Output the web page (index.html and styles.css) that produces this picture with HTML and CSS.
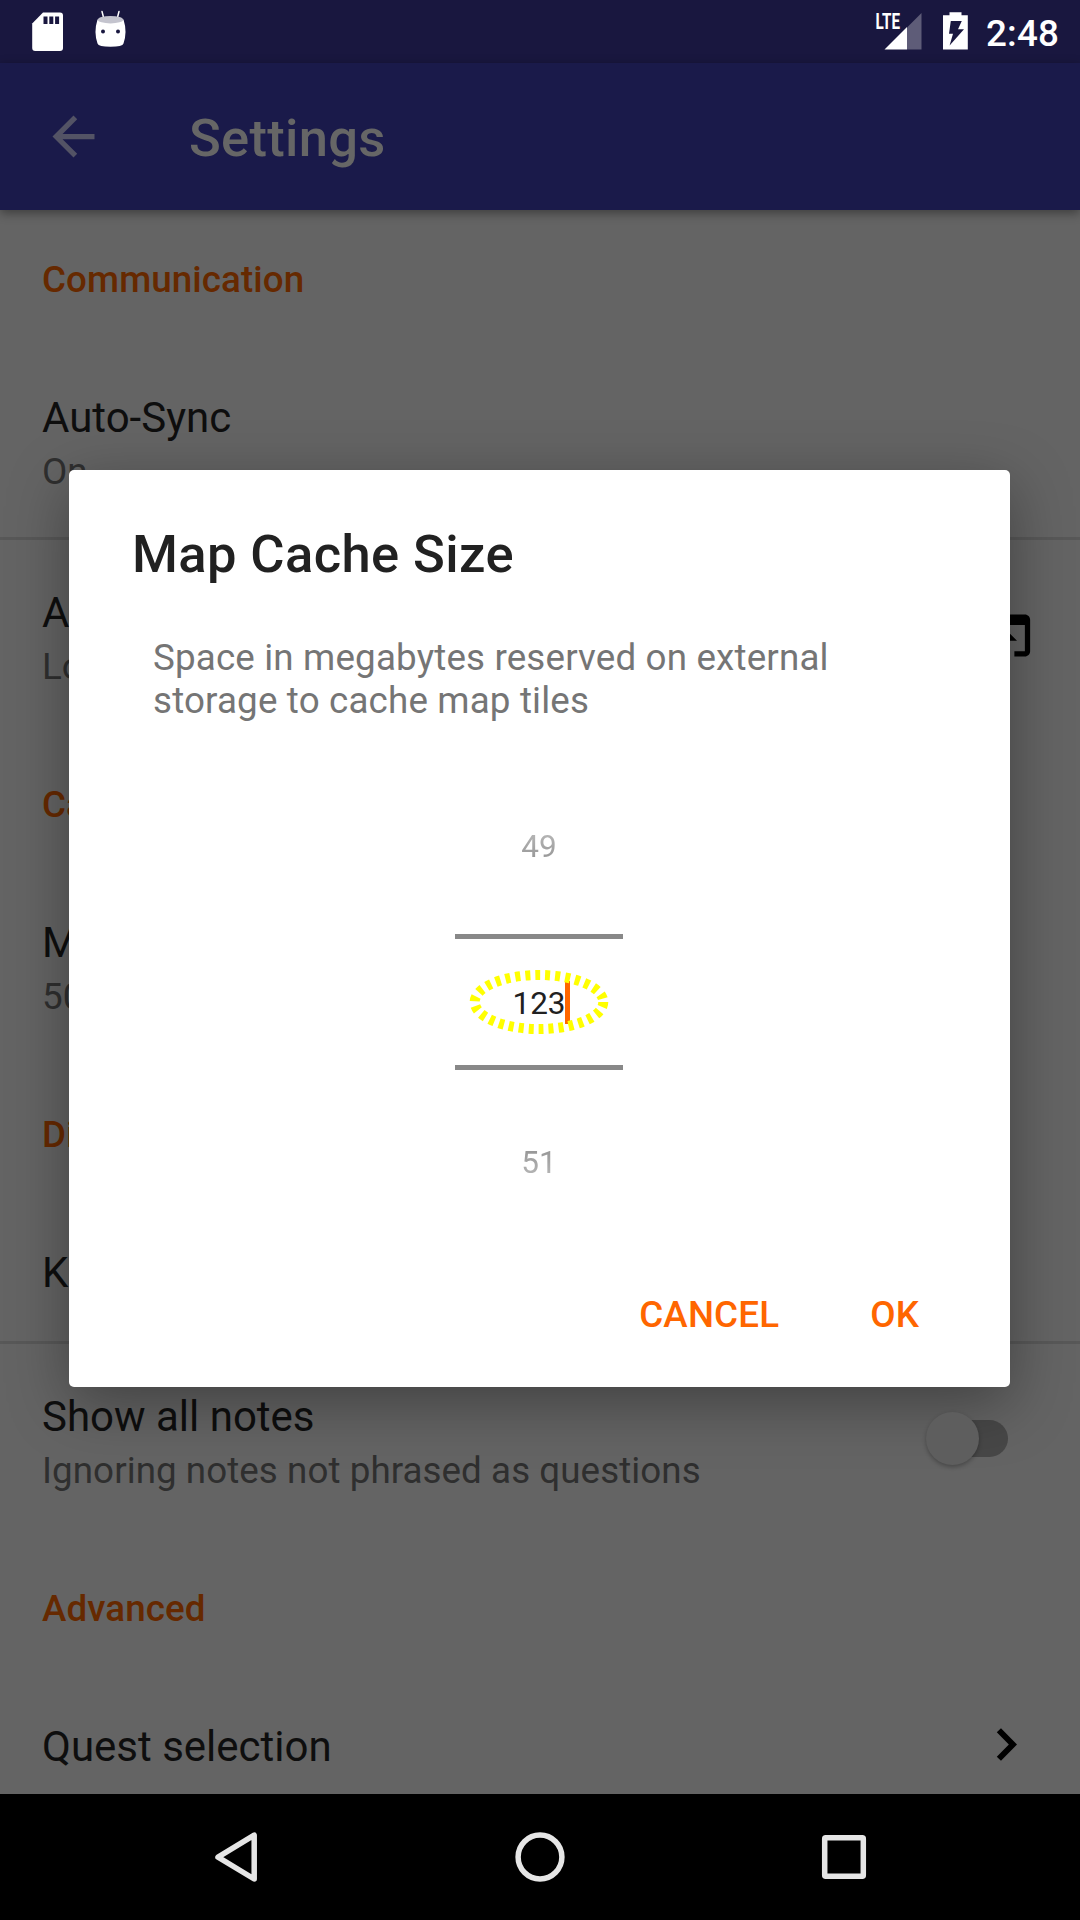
FILE: index.html
```html
<!DOCTYPE html>
<html lang="en">
<head>
<meta charset="utf-8">
<title>Settings</title>
<link rel="stylesheet" href="styles.css">
</head>
<body>
<header class="status-bar">
  <svg class="status-left" width="140" height="63" viewBox="0 0 140 63">
    <path fill="#fff" d="M43 12.500H60a3 3 0 0 1 3 3V48a3 3 0 0 1-3 3H35.200a3 3 0 0 1-3-3V23.500z"/>
    <path fill="#19173f" d="M43.500 16.500h4v7.500h-4zM49.300 16.500h4v7.500h-4zM55.100 16.500h4v7.500h-4z"/>
    <path stroke="#fff" stroke-width="1.500" stroke-linecap="round" d="M102 11.500l1.800 7M119 11.500l-1.800 7"/>
    <path fill="#fff" d="M97.500 19.500Q93.500 32 97.500 43.500Q98.500 46.700 110.500 46.700T123.500 43.500Q127.500 32 123.500 19.500z"/>
    <ellipse cx="110.500" cy="19.700" rx="12.700" ry="3.700" fill="#c4c4ce"/>
    <circle cx="103" cy="31.500" r="2" fill="#19173f"/><circle cx="118" cy="31.500" r="2" fill="#19173f"/>
  </svg>
  <div class="status-right">
    <svg width="110" height="63" viewBox="870 0 110 63">
      <text class="lte" x="875.500" y="28.700" textLength="24.500" lengthAdjust="spacingAndGlyphs">LTE</text>
      <path fill="#5e5c78" d="M907 27.500L921.500 13v36.500H907z"/>
      <path fill="#fff" d="M884.500 49.500L907 27v22.500z"/>
      <path fill="#fff" d="M949.500 12.300h12v3h6.300V49.500h-24.800V15.300h6.500z"/>
      <path fill="#19173f" d="M950.800 21h11l-3.800 8.300h6L949.600 45.500l3.400-11.700h-4z"/>
    </svg>
    <span class="clock">2:48</span>
  </div>
</header>
<div class="app-bar">
  <svg class="back" width="63" height="63" viewBox="0 0 24 24"><path fill="#535365" d="M20 11H7.830l5.590-5.590L12 4l-8 8 8 8 1.410-1.410L7.830 13H20v-2z"/></svg>
  <h1 class="app-title">Settings</h1>
</div>
<main class="settings">
  <h2 class="category">Communication</h2>
  <section class="row divided">
    <div class="texts"><div class="title">Auto-Sync</div><div class="summary">On</div></div>
  </section>
  <section class="row">
    <div class="texts"><div class="title">Authorization</div><div class="summary">Logged in</div></div>
    <svg class="open-icon" width="63" height="63" viewBox="0 0 24 24"><path d="M19 4H5c-1.110 0-2 .9-2 2v12c0 1.100.89 2 2 2h4v-2H5V8h14v10h-4v2h4c1.100 0 2-.9 2-2V6c0-1.100-.89-2-2-2zm-7 6l-4 4h3v6h2v-6h3l-4-4z"/></svg>
  </section>
  <h2 class="category">Cache</h2>
  <section class="row">
    <div class="texts"><div class="title">Map Cache Size</div><div class="summary">50 MB</div></div>
  </section>
  <h2 class="category">Display</h2>
  <section class="row divided">
    <div class="texts"><div class="title">Keep screen on</div></div>
  </section>
  <section class="row">
    <div class="texts"><div class="title">Show all notes</div><div class="summary">Ignoring notes not phrased as questions</div></div>
    <div class="switch"><div class="track"></div><div class="thumb"></div></div>
  </section>
  <h2 class="category">Advanced</h2>
  <section class="row">
    <div class="texts"><div class="title">Quest selection</div></div>
    <svg width="63" height="63" viewBox="0 -0.25 24 24"><path d="M8.300 16.400l4.600-4.650-4.600-4.650L9.900 5.550l6.100 6.200-6.100 6.200z"/></svg>
  </section>
</main>
<nav class="nav-bar">
  <svg width="1080" height="126" viewBox="0 0 1080 126" fill="none" stroke="#e6e6e6" stroke-width="5.500" stroke-linejoin="round">
    <path d="M254.200 41.200v43.800L218 63.200z"/>
    <circle cx="540" cy="63" r="21.900"/>
    <rect x="824.700" y="43.700" width="38.600" height="38.600" rx="1"/>
  </svg>
</nav>

<div class="dialog">
  <h2 class="dialog-title">Map Cache Size</h2>
  <p class="message">Space in megabytes reserved on external storage to cache map tiles</p>
  <div class="picker">
    <div class="number above">49</div>
    <div class="field">
      <span class="value">123</span>
      <span class="cursor"></span>
      <svg class="highlight" width="144" height="70" viewBox="-72 -35 144 70"><ellipse rx="64.300" ry="27" fill="none" stroke="#ff0" stroke-width="10" stroke-dasharray="5 5"/></svg>
    </div>
    <div class="number below">51</div>
  </div>
  <div class="actions"><span>CANCEL</span><span>OK</span></div>
</div>
</body>
</html>
```
FILE: styles.css
```css
* { box-sizing: border-box; margin: 0; padding: 0; }
body {
  position: relative;
  display: flex;
  flex-direction: column;
  width: 1080px;
  height: 1920px;
  overflow: hidden;
  background: #646464;
  font-family: Roboto, "Noto Sans", sans-serif;
  font-size: 36.75px;
}
svg { display: block; flex: none; }

.status-bar {
  display: flex;
  justify-content: space-between;
  height: 63px;
  background: #19173f;
}
.status-right { display: flex; padding-right: 22px; }
.lte { fill: #fff; font-size: 22px; font-weight: 700; }
.clock {
  width: 73px;
  padding-left: 1px;
  margin-left: 5px;
  color: #fff;
  font-weight: 500;
  letter-spacing: .2px;
  line-height: 67px;
  white-space: nowrap;
}

.app-bar {
  z-index: 1;
  display: flex;
  align-items: center;
  gap: 84px;
  height: 147px;
  padding-left: 42px;
  background: #1a1a4a;
  box-shadow: 0 3px 10px rgba(0, 0, 0, .4);
}
.app-title {
  padding-top: 3px;
  color: #666;
  font-size: 52.5px;
  font-weight: 500;
  letter-spacing: .3px;
  line-height: 62px;
}

.settings { flex: 1; min-height: 0; overflow: hidden; }
.category {
  height: 135px;
  padding: 48px 42px 44px;
  color: #662900;
  font-size: 36.75px;
  font-weight: 500;
  letter-spacing: .1px;
  line-height: 43px;
}
.row {
  display: flex;
  align-items: center;
  justify-content: space-between;
  padding: 0 42px;
  border-bottom: 3px solid transparent;
}
.divided { border-bottom-color: #585858; }
.texts {
  display: flex;
  flex-direction: column;
  gap: 8px;
  padding: 48px 0 44px;
}
.title { color: #0e0e0e; font-size: 42px; line-height: 49px; }
.summary { color: #2f2f2f; letter-spacing: .06px; line-height: 43px; }
.open-icon { margin-bottom: 2px; }

.switch { display: flex; align-items: center; margin: 0 30px 3px 0; }
.track { order: 2; width: 56px; height: 37px; margin-left: -27px; border-radius: 0 19px 19px 0; background: #474747; }
.thumb { order: 1; z-index: 1; width: 53px; height: 53px; border-radius: 50%; background: #5e5e5e; box-shadow: 0 2px 4px rgba(0, 0, 0, .28); }

.nav-bar { z-index: 1; height: 126px; background: #000; }

.dialog {
  position: absolute;
  left: 69px;
  top: 470px;
  display: flex;
  flex-direction: column;
  width: 941px;
  height: 917px;
  border-radius: 5px;
  background: #fff;
  box-shadow: 0 16px 60px rgba(0, 0, 0, .35);
}
.dialog-title {
  padding: 53px 63px 0;
  color: #212121;
  font-size: 52.5px;
  font-weight: 500;
  letter-spacing: .4px;
  line-height: 62px;
}
.message { width: 800px; padding: 51px 0 0 84px; color: #757575; letter-spacing: .16px; line-height: 43px; }
.picker {
  display: flex;
  flex-direction: column;
  align-items: center;
  width: 168px;
  margin: 106px 0 0 386px;
  font-size: 31.5px;
  line-height: 37px;
  text-align: center;
}
.number { color: #909090; }
.above { margin-bottom: 69px; mask-image: linear-gradient(rgba(0, 0, 0, .6), #000); }
.below { margin-top: 74px; mask-image: linear-gradient(#000, rgba(0, 0, 0, .6)); }
.field {
  position: relative;
  display: flex;
  align-items: center;
  justify-content: center;
  width: 168px;
  height: 136px;
  border: solid #888;
  border-width: 5px 0;
}
.value { padding-top: 3px; color: #212121; }
.cursor { position: absolute; left: 110px; top: 42px; width: 5px; height: 43px; background: #f60; }
.highlight { position: absolute; left: 12px; top: 28px; }
.actions {
  display: flex;
  justify-content: flex-end;
  gap: 91px;
  margin-top: auto;
  padding: 0 91px 51px;
  color: #f60;
  font-weight: 500;
  letter-spacing: .15px;
  line-height: 43px;
}
```
